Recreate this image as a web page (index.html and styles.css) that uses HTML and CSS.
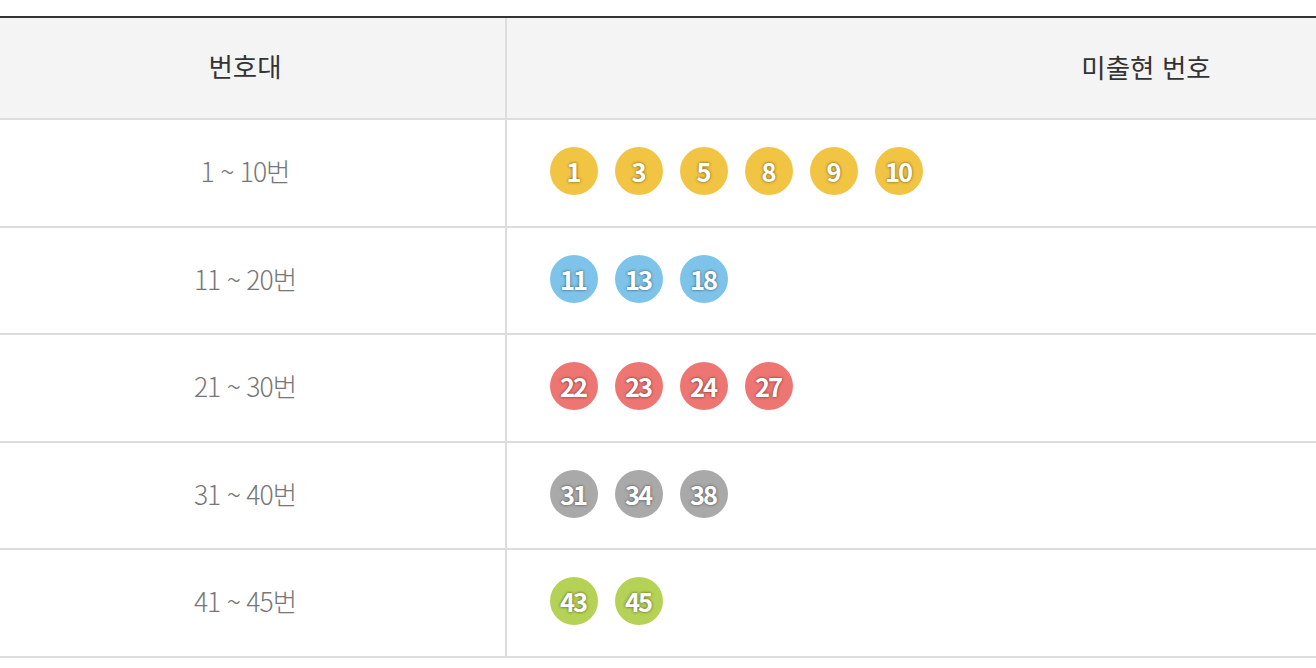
FILE: index.html
```html
<!DOCTYPE html>
<html lang="ko">
<head>
<meta charset="utf-8">
<title>미출현 번호</title>
<link rel="stylesheet" href="styles.css">
</head>
<body>
<div class="viewport">
  <div class="board">
    <div class="row head">
      <div class="cell range">번호대</div>
      <div class="cell nums center">미출현 번호</div>
    </div>
    <div class="row">
      <div class="cell range">1 ~ 10번</div>
      <div class="cell nums">
        <span class="ball y">1</span><span class="ball y">3</span><span class="ball y">5</span><span class="ball y">8</span><span class="ball y">9</span><span class="ball y">10</span>
      </div>
    </div>
    <div class="row">
      <div class="cell range">11 ~ 20번</div>
      <div class="cell nums">
        <span class="ball b">11</span><span class="ball b">13</span><span class="ball b">18</span>
      </div>
    </div>
    <div class="row">
      <div class="cell range">21 ~ 30번</div>
      <div class="cell nums">
        <span class="ball r">22</span><span class="ball r">23</span><span class="ball r">24</span><span class="ball r">27</span>
      </div>
    </div>
    <div class="row">
      <div class="cell range">31 ~ 40번</div>
      <div class="cell nums">
        <span class="ball g">31</span><span class="ball g">34</span><span class="ball g">38</span>
      </div>
    </div>
    <div class="row">
      <div class="cell range">41 ~ 45번</div>
      <div class="cell nums">
        <span class="ball l">43</span><span class="ball l">45</span>
      </div>
    </div>
  </div>
</div>
</body>
</html>
```

FILE: styles.css
```css
html, body {
  margin: 0;
  padding: 0;
  background: #fff;
}
body {
  font-family: "Noto Sans CJK KR", "Noto Sans", sans-serif;
  overflow: hidden;
}
.viewport {
  width: 1316px;
  height: 668px;
  overflow: hidden;
  padding-top: 16px;
  box-sizing: border-box;
}
.board {
  width: 1785px;
  border-top: 2px solid #333;
}
.row {
  display: grid;
  grid-template-columns: 507px 1fr;
  height: 107.5px;
  border-bottom: 2px solid #ddd;
  box-sizing: border-box;
}
.row.head {
  height: 102px;
  background: #f4f4f4;
}
.cell {
  display: flex;
  align-items: center;
  padding-bottom: 3px;
  box-sizing: border-box;
}
.range {
  justify-content: center;
  padding-right: 15px;
  border-right: 2px solid #ddd;
  font-size: 26.5px;
  font-weight: 300;
  color: #777;
  letter-spacing: -1px;
  line-height: 1;
}
.head .cell {
  font-size: 26.5px;
  font-weight: 400;
  color: #333;
  letter-spacing: 0;
  padding-bottom: 4px;
}
.nums {
  padding-left: 43px;
  gap: 17px;
}
.nums.center {
  justify-content: center;
  padding-left: 0;
}
.ball {
  width: 48px;
  height: 48px;
  border-radius: 50%;
  display: inline-flex;
  align-items: center;
  justify-content: center;
  color: #fff;
  font-size: 25.5px;
  font-weight: 700;
  letter-spacing: -2px;
  text-indent: -2px;
  line-height: 1;
  padding-bottom: 1px;
  box-sizing: border-box;
  text-shadow: 0 0 3px rgba(0, 0, 0, 0.6);
}
.ball.y { background: #f2c443; }
.ball.b { background: #7ec4ea; }
.ball.r { background: #ee7672; }
.ball.g { background: #a9a9a9; }
.ball.l { background: #b5d156; }
```
